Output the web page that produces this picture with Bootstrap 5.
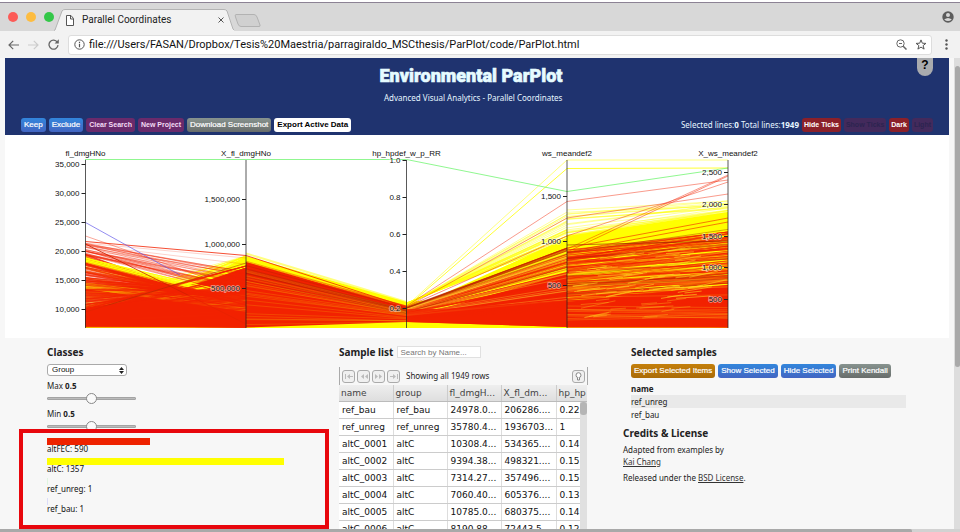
<!DOCTYPE html>
<html lang="en">
<head>
<meta charset="utf-8">
<meta name="viewport" content="width=device-width, initial-scale=1">
<title>Parallel Coordinates</title>
<link href="https://cdn.jsdelivr.net/npm/bootstrap@5.3.0/dist/css/bootstrap.min.css" rel="stylesheet">
<style>
  :root { --ui: "Noto Sans", "Open Sans", sans-serif; --arial: "Liberation Sans", Arial, sans-serif; --wide: "DejaVu Sans", Verdana, sans-serif; --chrome: Roboto, Inter, sans-serif; }
  body { background: #f7f7f7; color: #222; font: 8px/12px var(--ui); }
  button, input, select { font-family: inherit; margin: 0; }

  .tabstrip { height: 31px; background: #d8d8d8; border-top: 2px solid #fff; box-shadow: inset 0 1px 0 #8c8294; padding-left: 8px; padding-right: 6px; }
  .light { width: 10px; height: 10px; border-radius: 50%; border: 0; padding: 0; }
  .tab-shape { width: 180px; height: 22px; padding: 0 10px 0 12px; font: 10px/22px var(--chrome); color: #222; }
  .tab-shape > svg.outline { position: absolute; inset: 0; width: 100%; height: 100%; z-index: -1; }
  .plain { background: none; border: 0; padding: 0; line-height: 0; }
  .toolbar { height: 27px; background: #f2f2f2; padding: 0 8px; gap: 9px; }
  .address { height: 20px; background: #fff; border: 1px solid #ddd; border-radius: 3px; padding: 0 4px 0 5px; gap: 4px; }
  .address input { border: 0; outline: 0; background: none; padding: 0; font: 11px/18px var(--chrome); color: #111; min-width: 0; }

  .viewport { min-height: 0; padding-left: 5px; padding-right: 11px; }
  .vscroll { position: absolute; top: 0; right: 0; bottom: 0; width: 6px; background: #ddd; padding-top: 8px; }
  .vthumb { height: 301px; background: #a9a9a9; border-radius: 3px; margin-left: 1px; }
  .hscroll { height: 3px; background: #d2d2d2; }
  .hthumb { width: 95%; height: 3px; background: #a9a9a9; border-radius: 0 2px 0 0; }

  .masthead { background: #1f336f; color: #e6f6ff; height: 77px; }
  .masthead h1 { font: 900 18px/24px Roboto, Impact, sans-serif; -webkit-text-stroke: .6px #e6fbff; color: #e6fbff; margin: 0; padding-top: 6px; }
  .headline { margin-right: 12px; }
  .help { position: absolute; top: 0; right: 16px; width: 16px; height: 18px; border: 0; padding: 0 0 4px; border-radius: 0 0 8px 8px; background: #a9abae; color: #000; font: bold 12px/14px var(--arial); }
  .actions { padding: 0 16px 3px; gap: 3px; }
  .abtn { font: 8px/14px var(--arial); color: #fff; border: 0; border-radius: 3px; padding: 0 3px; white-space: nowrap; -webkit-text-stroke: .2px currentColor; }
  .abtn.fine { font-size: 7px; font-weight: bold; -webkit-text-stroke: 0; }
  .abtn.brick { padding: 0 2px; }
  .blue { background: linear-gradient(#3286dc, #4265c2); }
  .plum { background: #6a2a6b; color: #f3dcf5; }
  .gray { background: linear-gradient(#87938f, #686d6b); }
  .pale { background: #fff; color: #000; font-weight: bold; -webkit-text-stroke: 0; }
  .brick { background: #8b2029; }
  .brick:disabled { background: #432a5c; color: #2c2450; }
  .amber { background: linear-gradient(#c47f0b, #aa6a06); }

  .plot { background: #fff; }
  .plot text { font: 8px var(--arial); fill: #111; }
  .plot .tick { text-anchor: end; paint-order: stroke; stroke: rgba(255,255,255,.55); stroke-width: 1.5px; }
  .plot .axis-name { text-anchor: middle; }

  .panels { display: grid; grid-template-columns: 292px 292px 1fr; padding: 7px 42px 0; }
  h2 { font: bold 10px/14px var(--ui); margin: 0; color: #222; }
  .classes select { width: 80px; height: 12px; border: 1px solid #aaa; border-radius: 3px; background: #fff; font: 8px/10px var(--arial); padding: 0 4px; appearance: none; color: #111; display: block; }
  .picker { width: 80px; margin-top: 5px; }
  .picker svg { position: absolute; right: 3px; top: 3px; }
  .slider { appearance: none; display: block; width: 89px; height: 12px; background: none; margin: 0; }
  .slider::-webkit-slider-runnable-track { height: 3px; background: #bbb; border: 1px solid #a4a4a4; border-radius: 1px; }
  .slider::-webkit-slider-thumb { appearance: none; width: 11px; height: 11px; border-radius: 50%; background: #fafafa; border: 1px solid #888; margin-top: -5px; }
  .legend { margin: 6px 0 0; padding: 0; list-style: none; font-size: 8px; color: #111; }
  .legend li { height: 20px; line-height: 8px; }
  .meter { height: 7px; }
  .callout-box { position: absolute; top: -9px; bottom: -11px; left: -28px; right: 10px; border: 4px solid #e8070d; pointer-events: none; }

  .search { width: 84px; height: 12px; border: 1px solid #e0e0e0; background: #fff; font: 8px/10px var(--arial); padding: 0 2px; }
  .search::placeholder { color: #777; opacity: 1; }
  .pager { border: solid #aaa; border-width: 0 1px; height: 18px; margin-top: 8px; padding: 0 2px; gap: 2px; width: 249px; }
  .pager button { width: 13px; height: 13px; border: 1px solid #aaa; border-radius: 3px; background: #f0f0f0; padding: 0; line-height: 0; }
  .grid-wrap { width: 248px; overflow: hidden; }
  .samples { table-layout: fixed; border-collapse: collapse; width: 271px; font: 9px/16px var(--wide); color: #111; background: #fff; }
  .samples th { font-weight: normal; background: linear-gradient(#eee, #dedede); color: #444; border-right: 1px solid #ccc; border-bottom: 1px solid #bbb; padding: 0 2px; white-space: nowrap; overflow: hidden; }
  .samples td { border-right: 1px solid #ddd; border-bottom: 1px solid #ccc; padding: 0 0 0 3px; white-space: nowrap; overflow: hidden; }
  .gridbar { position: absolute; top: 17px; right: 0; bottom: 0; width: 7px; background: #e0e0e0; }
  .gridbar div { height: 13px; background: #b5b5b5; border-radius: 3px; }

  .chosen-actions { gap: 3px; margin-top: 5px; }
  .chosen { width: 100%; max-width: 275px; margin-top: 4px; }
  .chosen td, .chosen th { height: 13px; line-height: 13px; padding: 0; }
  .chosen .on td { background: #e9e9e9; }
  .credits { margin-left: -8px; margin-top: 5px; }
  .credits p { margin: 0 0 4px; }
  .credits a { color: #333; }
</style>
<script src="https://cdn.jsdelivr.net/npm/bootstrap@5.3.0/dist/js/bootstrap.bundle.min.js"></script>
</head>
<body class="vh-100 overflow-hidden d-flex flex-column">

<header class="flex-shrink-0">
  <div class="tabstrip d-flex align-items-end">
    <div class="d-flex gap-1 align-self-center">
      <button class="light" style="background:#fc5b57" aria-label="Close window"></button>
      <button class="light ms-1" style="background:#fdbc40" aria-label="Minimize"></button>
      <button class="light ms-1" style="background:#33c748" aria-label="Zoom"></button>
    </div>
    <div class="tab-shape position-relative z-1 d-flex align-items-center">
      <svg class="outline" viewBox="0 0 180 22" preserveAspectRatio="none"><path d="M-1 22L1 21 8 2Q9 .5 11 .5H170Q172 .5 173 2L179 20 181 22" fill="#f2f2f2" stroke="#b4b4b4"/></svg>
      <svg class="me-2" width="8" height="11" viewBox="0 0 8 11" fill="#fff" stroke="#555"><path d="M.5.5h4.500L7.500 3.500v7h-7zM4.500.5V4h3"/></svg>
      <span>Parallel Coordinates</span>
      <button class="plain ms-auto" aria-label="Close tab"><svg width="6" height="6" viewBox="0 0 6 6" stroke="#555"><path d="M.5.5l5 5M5.500.5l-5 5"/></svg></button>
    </div>
    <svg class="mb-1" width="27" height="13" viewBox="0 0 27 13"><path d="M2 .5H20Q22 .5 23 3L26 11Q26.500 12.500 25 12.500H7Q5 12.500 4 10L1.500 3Q.5.5 2 .5Z" fill="#d0d0d0" stroke="#b2b2b2"/></svg>
    <svg class="ms-auto align-self-center" width="12" height="12" viewBox="0 0 12 12"><circle cx="6" cy="6" r="5.700" fill="#5c5c5c"/><circle cx="6" cy="4" r="2" fill="#d8d8d8"/><path d="M2.200 8.500Q6 5.300 9.800 8.500Q6 11.700 2.200 8.500" fill="#d8d8d8"/></svg>
  </div>
  <div class="toolbar d-flex align-items-center">
    <button class="plain" aria-label="Back"><svg width="11" height="10" viewBox="0 0 11 10" fill="none" stroke="#666" stroke-width="1.200"><path d="M11 5H1M5.200.8L1 5l4.200 4.200"/></svg></button>
    <button class="plain" aria-label="Forward"><svg width="11" height="10" viewBox="0 0 11 10" fill="none" stroke="#ccc" stroke-width="1.200"><path d="M0 5h10M5.800.8L10 5 5.800 9.200"/></svg></button>
    <button class="plain" aria-label="Reload"><svg width="11" height="11" viewBox="0 0 11 11" fill="none" stroke="#666" stroke-width="1.300"><path d="M9.300 3.200A4.500 4.500 0 1 0 10 6.200"/><path d="M10.800.3v4.200H6.600z" fill="#666" stroke="none"/></svg></button>
    <div class="address d-flex align-items-center flex-grow-1">
      <svg width="11" height="11" viewBox="0 0 11 11" fill="none" stroke="#555"><circle cx="5.500" cy="5.500" r="4.700"/><path d="M5.500 4.800V8.200M5.500 2.700V3.900" stroke-width="1.200"/></svg>
      <input class="flex-grow-1" aria-label="Address" value="file:///Users/FASAN/Dropbox/Tesis%20Maestria/parragiraldo_MSCthesis/ParPlot/code/ParPlot.html">
      <svg width="11" height="11" viewBox="0 0 11 11" fill="none" stroke="#666"><circle cx="4.500" cy="4.500" r="3.700"/><path d="M7.200 7.200l3.300 3.300" stroke-width="1.500"/><path d="M3 4.500h3"/></svg>
      <svg class="ms-1" width="12" height="11" viewBox="0 0 12 11" fill="none" stroke="#555"><path d="M6 .9L7.300 4.200 10.900 4.400 8.100 6.600 9.100 10.100 6 8.100 2.900 10.100 3.900 6.600 1.100 4.400 4.700 4.200z"/></svg>
    </div>
    <button class="plain px-1" aria-label="Menu"><svg width="3" height="11" viewBox="0 0 3 11" fill="#555"><circle cx="1.500" cy="1.500" r="1.200"/><circle cx="1.500" cy="5.500" r="1.200"/><circle cx="1.500" cy="9.500" r="1.200"/></svg></button>
  </div>
</header>

<div class="viewport position-relative flex-grow-1 overflow-hidden">
  <div class="masthead position-relative d-flex flex-column">
    <div class="d-flex justify-content-center">
      <div class="headline text-end">
        <h1>Environmental ParPlot</h1>
        <div class="pt-1">Advanced Visual Analytics - Parallel Coordinates</div>
      </div>
    </div>
    <button class="help">?</button>
    <div class="actions d-flex align-items-center mt-auto">
      <button class="abtn blue">Keep</button>
      <button class="abtn blue">Exclude</button>
      <button class="abtn fine plum">Clear Search</button>
      <button class="abtn fine plum">New Project</button>
      <button class="abtn gray">Download Screenshot</button>
      <button class="abtn pale">Export Active Data</button>
      <span class="ms-auto">Selected lines:<b>0</b> Total lines:<b>1949</b></span>
      <button class="abtn fine brick">Hide Ticks</button>
      <button class="abtn fine brick" disabled>Show Ticks</button>
      <button class="abtn fine brick">Dark</button>
      <button class="abtn fine brick" disabled>Light</button>
    </div>
  </div>

  <div class="plot"><svg id="chart" class="d-block w-100" viewBox="5 135 944 203" role="img" aria-label="Parallel coordinates plot"></svg></div>

  <main class="panels">
    <section class="classes">
      <h2>Classes</h2>
      <div class="picker position-relative">
        <select aria-label="Classes"><option>Group</option></select>
        <svg width="5" height="7" viewBox="0 0 5 7" fill="#222"><path d="M0 3L2.500 0 5 3zM0 4L2.500 7 5 4z"/></svg>
      </div>
      <label class="d-block mt-1" for="max">Max <b>0.5</b></label>
      <input class="slider" id="max" type="range" min="0" max="1" step="0.1" value="0.5">
      <label class="d-block mt-1" for="min">Min <b>0.5</b></label>
      <input class="slider" id="min" type="range" min="0" max="1" step="0.1" value="0.5">
      <div class="position-relative">
        <ul class="legend">
          <li><div class="meter" style="width:103px;background:#ee2200"></div>altFEC: 590</li>
          <li><div class="meter" style="width:237px;background:#ffff00"></div>altC: 1357</li>
          <li><div class="meter" style="width:1px;background:#dff5df"></div>ref_unreg: 1</li>
          <li><div class="meter" style="width:1px;background:#dcdcf8"></div>ref_bau: 1</li>
        </ul>
        <div class="callout-box"></div>
      </div>
    </section>

    <section>
      <div class="d-flex align-items-center gap-1">
        <h2>Sample list</h2>
        <input class="search" type="search" placeholder="Search by Name..." aria-label="Search by Name">
      </div>
      <div class="pager d-flex align-items-center">
        <button aria-label="First page"><svg width="8" height="5" viewBox="0 0 8 5" fill="#bbb"><path d="M0 0h1v5H0zM5 0v5L2 2.500zM5 2h3v1H5z"/></svg></button>
        <button aria-label="Previous page"><svg width="8" height="5" viewBox="0 0 8 5" fill="#bbb"><path d="M4 0v5L1 2.500zM8 0v5L5 2.500z"/></svg></button>
        <button aria-label="Next page"><svg width="8" height="5" viewBox="0 0 8 5" fill="#bbb"><path d="M0 0v5l3-2.500zM4 0v5l3-2.500z"/></svg></button>
        <button aria-label="Last page"><svg width="8" height="5" viewBox="0 0 8 5" fill="#bbb"><path d="M7 0h1v5H7zM3 0v5l3-2.500zM0 2h3v1H0z"/></svg></button>
        <span class="ms-1">Showing all 1949 rows</span>
        <button class="ms-auto" aria-label="Toggle search panel"><svg width="7" height="9" viewBox="0 0 7 9" fill="#fff" stroke="#888"><circle cx="3.500" cy="3.200" r="2.500"/><path d="M2.500 5.500v2.500h2v-2.500"/></svg></button>
      </div>
      <div class="grid-wrap position-relative">
        <table class="samples">
          <colgroup><col style="width:54px"><col style="width:54px"><col style="width:54px"><col style="width:55px"><col style="width:54px"></colgroup>
          <thead><tr><th>name</th><th>group</th><th>fl_dmgH...</th><th>X_fl_dm...</th><th>hp_hp</th></tr></thead>
          <tbody>
            <tr><td>ref_bau</td><td>ref_bau</td><td>24978.0...</td><td>206286....</td><td>0.22</td></tr>
            <tr><td>ref_unreg</td><td>ref_unreg</td><td>35780.4...</td><td>1936703...</td><td>1</td></tr>
            <tr><td>altC_0001</td><td>altC</td><td>10308.4...</td><td>534365....</td><td>0.14</td></tr>
            <tr><td>altC_0002</td><td>altC</td><td>9394.38...</td><td>498321....</td><td>0.15</td></tr>
            <tr><td>altC_0003</td><td>altC</td><td>7314.27...</td><td>357496....</td><td>0.15</td></tr>
            <tr><td>altC_0004</td><td>altC</td><td>7060.40...</td><td>605376....</td><td>0.13</td></tr>
            <tr><td>altC_0005</td><td>altC</td><td>10785.0...</td><td>680375....</td><td>0.14</td></tr>
            <tr><td>altC_0006</td><td>altC</td><td>8190.88...</td><td>72443.5...</td><td>0.12</td></tr>
          </tbody>
        </table>
        <div class="gridbar"><div></div></div>
      </div>
    </section>

    <section>
      <h2>Selected samples</h2>
      <div class="chosen-actions d-flex">
        <button class="abtn amber">Export Selected Items</button>
        <button class="abtn blue">Show Selected</button>
        <button class="abtn blue">Hide Selected</button>
        <button class="abtn gray">Print Kendall</button>
      </div>
      <table class="chosen">
        <thead><tr><th>name</th></tr></thead>
        <tbody><tr class="on"><td>ref_unreg</td></tr><tr><td>ref_bau</td></tr></tbody>
      </table>
      <div class="credits">
        <h2>Credits &amp; License</h2>
        <p class="mt-1">Adapted from examples by<br><a href="#kai">Kai Chang</a></p>
        <p>Released under the <a href="#bsd">BSD License</a>.</p>
      </div>
    </section>
  </main>

  <div class="vscroll"><div class="vthumb"></div></div>
</div>
<div class="hscroll flex-shrink-0"><div class="hthumb"></div></div>

<script>
  const svg = document.getElementById('chart');
  const X = [85.5, 246, 406.5, 567, 728], RED = '#f22200', YEL = '#ffff00';
  let seed = 11;
  const rnd = () => (seed = (seed * 16807) % 2147483647) / 2147483647;
  const between = (a, b) => a + (b - a) * rnd();
  let out = '';
  const line = (seg, a, b, color, o, w = 1) => out += `<path d="M${X[seg]} ${a.toFixed(1)}L${X[seg + 1]} ${b.toFixed(1)}" stroke="${color}" stroke-opacity="${o}" stroke-width="${w}"/>`;
  const area = (pts, color, o = 1) => out += `<polygon points="${pts}" fill="${color}" fill-opacity="${o}"/>`;
  // n lines whose ends are spread over [a0,a1] and [b0,b1]; bias > 1 packs them towards the first value
  const fan = (n, seg, a0, a1, b0, b1, color, o, jitter = 0.15, bias = 1) => {
    for (let i = 0; i < n; i++) {
      const t = Math.pow(rnd(), bias), u = Math.min(1, Math.max(0, t + between(-jitter, jitter)));
      line(seg, a0 + (a1 - a0) * t, b0 + (b1 - b0) * u, color, o);
    }
  };

  // first gap: high starts fall, low starts rise
  area('85.5,306 200,282 246,256 246,328 85.5,328', YEL);
  fan(60, 0, 256, 327, 327, 256, YEL, .6, .12);
  fan(40, 0, 300, 327, 256, 290, YEL, .4, .5);
  area('85.5,308 180,293 246,268 246,327.5 85.5,326', RED);
  fan(170, 0, 254, 327, 312, 268, RED, .5, .16);
  fan(22, 0, 241, 256, 272, 296, RED, .4, .3);
  fan(7, 0, 242, 256, 258, 280, RED, .2, .3);
  fan(12, 0, 257, 263, 294, 304, YEL, .85, .2);
  fan(10, 0, 283, 289, 300, 312, YEL, .7, .3);
  fan(60, 0, 262, 310, 305, 285, RED, .4, .2);
  fan(60, 0, 306, 327, 266, 327, RED, .6, .4);
  line(0, 236, 292, RED, .4); line(0, 241.500, 255.500, RED, .8); line(0, 244, 324, '#d02000', .8);
  line(0, 312, 263, '#a03000', .5);
  out += `<path d="M85.5 222.500L180 275" stroke="#5a50e8" stroke-opacity=".65"/>`;
  area('85.5,308 246,288 246,327.5 85.5,326', RED, .7);

  // second gap: everything narrows
  area('246,256 406.5,302 406.5,328 246,328', YEL);
  line(1, 253.500, 302, YEL, .5, 2);
  area('246,262 406.5,308 406.5,322 246,327.5', RED);
  fan(30, 1, 260, 300, 306, 315, RED, .4, .1);
  fan(22, 1, 268, 325, 310, 322, YEL, .16, .1);
  fan(8, 1, 264, 280, 308, 314, '#902000', .25, .1);
  line(1, 255.500, 307, RED, .8);

  // third gap: fans out
  area('406.5,302 430,300 567,238 567,328 406.5,328', YEL);
  fan(34, 2, 303, 306, 240, 212, YEL, .4, .2, 1.400);
  area('406.5,309 440,309 567,274 567,327 406.5,322', RED);
  fan(75, 2, 308, 319, 248, 310, RED, .6, .1);
  fan(20, 2, 308, 316, 252, 300, '#ffd030', .35, .1);
  fan(6, 2, 307, 312, 246, 270, '#b02800', .5, .1);
  area('406.5,309 440,309 567,300 567,327 406.5,322', RED, .8);
  line(2, 306, 160, YEL, .5); line(2, 307, 168.500, YEL, .8);
  line(2, 306, 201.500, RED, .45); line(2, 307, 218, RED, .45); line(2, 307, 236, RED, .5);

  // fourth gap: near level, streaked
  area('567,236 728,212 728,328 567,328', YEL);
  fan(26, 3, 238, 210, 214, 201, YEL, .4, .3, 1.500);
  area('567,302 728,285 728,327.5 567,327.5', RED);
  fan(180, 3, 250, 327, 232, 327, RED, .62, .1);
  fan(30, 3, 262, 320, 245, 318, '#ff9a10', .35, .15);
  fan(7, 3, 248, 300, 228, 290, '#a02800', .4, .1);
  for (let i = 0; i < 70; i++) {
    const x = between(569, 690), y = between(258 - (x - 567) * .1, 318), l = between(12, 38);
    out += `<path d="M${x.toFixed(1)} ${y.toFixed(1)}l${l.toFixed(1)} ${(-l * between(.05, .22)).toFixed(1)}" stroke="#ffd21c" stroke-opacity="${(y > 300 ? .35 : .6)}" stroke-width="1"/>`;
  }
  line(3, 160, 160, YEL, .5); line(3, 168.500, 168, YEL, .8);
  line(3, 201.500, 180, RED, .45); line(3, 218, 194, RED, .45); line(3, 236, 182, RED, .45);
  line(3, 249, 175, RED, .45); line(3, 252, 176, RED, .5); line(3, 245, 241, '#902000', .6);
  line(3, 248, 218, RED, .6); line(3, 252, 222, RED, .6);

  // reference run
  out += '<path d="M85 159.500H406.500L567 191.500 728 168" stroke="#74f574" stroke-opacity=".8"/>';

  const axes = [
    ['fl_dmgHNo', [['35,000', 164.500], ['30,000', 193.500], ['25,000', 222.500], ['20,000', 251.500], ['15,000', 280.500], ['10,000', 309.500]]],
    ['X_fl_dmgHNo', [['1,500,000', 199.500], ['1,000,000', 244.500], ['500,000', 288.500]]],
    ['hp_hpdef_w_p_RR', [['1.0', 160.500], ['0.8', 197.500], ['0.6', 234.500], ['0.4', 271.500], ['0.2', 308.500]]],
    ['ws_meandef2', [['1,500', 196.500], ['1,000', 241.500], ['500', 285.500]]],
    ['X_ws_meandef2', [['2,500', 172.500], ['2,000', 204.500], ['1,500', 236.500], ['1,000', 267.500], ['500', 299.500]]]
  ];
  axes.forEach(([name, ticks], i) => {
    out += `<path d="M${X[i]} 160V328" stroke="#222" stroke-opacity=".75"/><text class="axis-name" x="${X[i]}" y="156">${name}</text>`;
    ticks.forEach(([t, y]) => out += `<path d="M${X[i] - 4} ${y}h4" stroke="#222"/><text class="tick" x="${X[i] - 6}" y="${y + 2.5}">${t}</text>`);
  });
  svg.innerHTML = `<g fill="none">${out}</g>`;
</script>
</body>
</html>
